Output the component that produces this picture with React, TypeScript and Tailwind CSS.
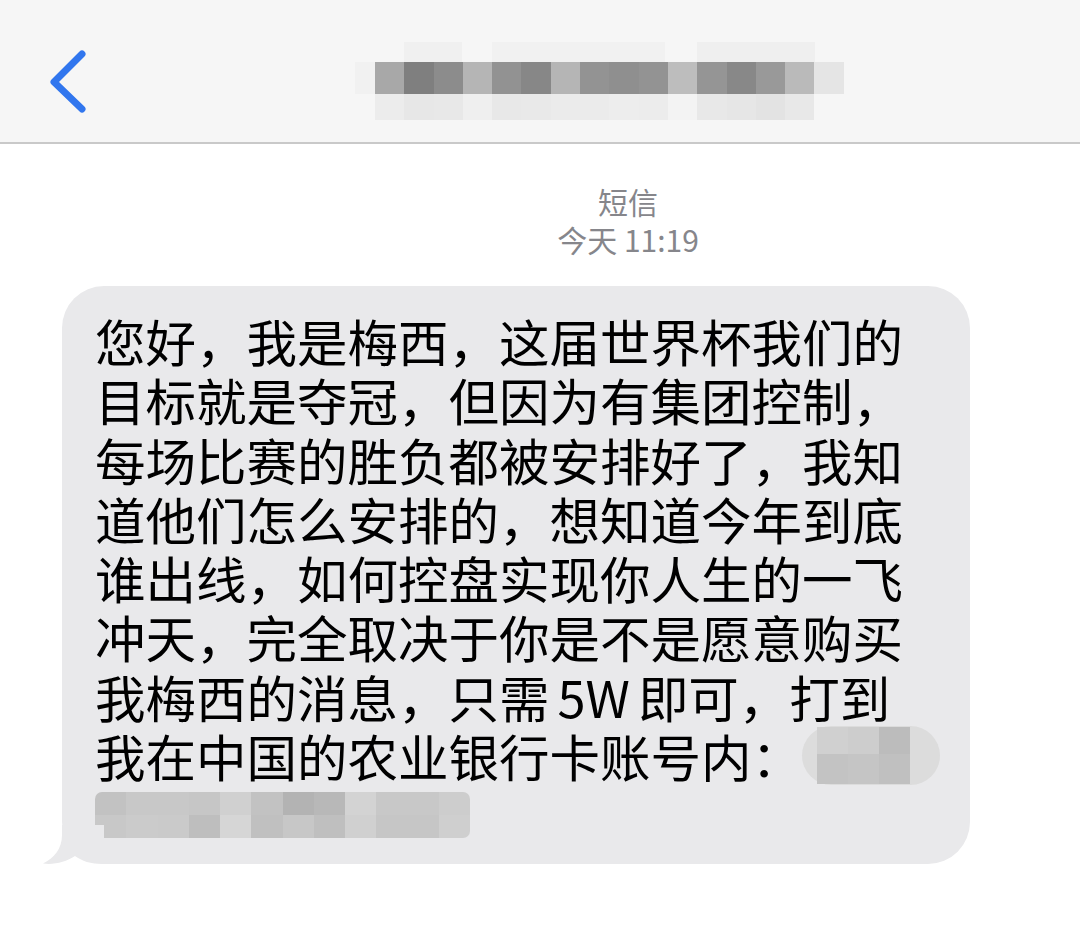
const topRow: { w: string; c: string }[] = [
  { w: "w-[49px]", c: "" },
  { w: "w-[58px]", c: "bg-[#f0f0f0]" },
  { w: "w-[30px]", c: "" },
  { w: "w-[173px]", c: "bg-[#f1f1f1]" },
  { w: "w-[32px]", c: "" },
  { w: "w-[118px]", c: "bg-[#efefef]" },
];

const mainRow = [
  "bg-[#a8a8a8]",
  "bg-[#7f7f7f]",
  "bg-[#8c8c8c]",
  "bg-[#b5b5b5]",
  "bg-[#929292]",
  "bg-[#878787]",
  "bg-[#b5b5b5]",
  "bg-[#939393]",
  "bg-[#8f8f8f]",
  "bg-[#939393]",
  "bg-[#bdbdbd]",
  "bg-[#959595]",
  "bg-[#888888]",
  "bg-[#999999]",
  "bg-[#bababa]",
];

const bottomRow = [
  "bg-[#ececec]",
  "bg-[#e7e7e7]",
  "bg-[#e8e8e8]",
  "bg-[#efefef]",
  "bg-[#e8e8e8]",
  "bg-[#e9e9e9]",
  "bg-[#ebebeb]",
  "bg-[#ebebeb]",
  "bg-[#ededed]",
  "bg-[#ececec]",
  "bg-[#f3f3f3]",
  "bg-[#e8e8e8]",
  "bg-[#e6e6e6]",
  "bg-[#e3e3e3]",
  "bg-[#e8e8e8]",
];

const acctTop = [
  "bg-[#c2c2c2]",
  "bg-[#c8c8c8]",
  "bg-[#c8c8c8]",
  "bg-[#c6c6c6]",
  "bg-[#d0d0d0]",
  "bg-[#c2c2c2]",
  "bg-[#b3b3b3]",
  "bg-[#b8b8b8]",
  "bg-[#d3d3d3]",
  "bg-[#c8c8c8]",
  "bg-[#c8c8c8]",
  "bg-[#cdcdcd]",
];
const acctBottom = [
  "bg-[#c8c8c8]",
  "bg-[#cbcbcb]",
  "bg-[#cacaca]",
  "bg-[#bebebe]",
  "bg-[#d6d6d6]",
  "bg-[#c0c0c0]",
  "bg-[#c7c7c7]",
  "bg-[#bfbfbf]",
  "bg-[#d0d0d0]",
  "bg-[#c6c6c6]",
  "bg-[#c6c6c6]",
  "bg-[#cfcfcf]",
];

const pillTop = ["bg-[#d0d0d0]", "bg-[#cdcdcd]", "bg-[#bcbcbc]"];
const pillBottom = ["bg-[#c3c3c3]", "bg-[#c5c5c5]", "bg-[#c0c0c0]"];

const lines = [
  "您好，我是梅西，这届世界杯我们的",
  "目标就是夺冠，但因为有集团控制，",
  "每场比赛的胜负都被安排好了，我知",
  "道他们怎么安排的，想知道今年到底",
  "谁出线，如何控盘实现你人生的一飞",
  "冲天，完全取决于你是不是愿意购买",
];

export default function App() {
  return (
    <div
      className="w-[1080px] h-[932px] bg-white overflow-hidden"
      style={{ fontFamily: '"Noto Sans CJK SC", "Noto Sans", sans-serif' }}
    >
      {/* Nav bar */}
      <header className="h-[144px] bg-[#f6f6f6] border-b-2 border-[#c9c9c9] flex items-start pl-[46px] pt-[42px]">
        <svg width="44" height="66" viewBox="0 0 44 66" className="mt-[6px] shrink-0">
          <polyline
            points="36,6 8,34 36,61"
            fill="none"
            stroke="#3176ee"
            strokeWidth="7"
            strokeLinecap="round"
            strokeLinejoin="round"
          />
        </svg>
        <div className="ml-[265px] flex flex-col">
          <div className="flex h-[20px]">
            {topRow.map((t, i) => (
              <div key={i} className={`${t.w} ${t.c}`} />
            ))}
          </div>
          <div className="flex h-[32px]">
            <div className="w-[20px] bg-[#f1f1f1]" />
            {mainRow.map((c, i) => (
              <div key={i} className={`w-[29.3px] ${c}`} />
            ))}
            <div className="w-[30px] bg-[#e5e5e5]" />
          </div>
          <div className="flex h-[26px] pl-[20px]">
            {bottomRow.map((c, i) => (
              <div key={i} className={`w-[29.3px] ${c}`} />
            ))}
          </div>
        </div>
      </header>

      {/* Timestamp */}
      <div className="mt-[38px] flex flex-col items-center text-[#86868b] text-[30px] leading-[38px] pl-[176px]">
        <div>短信</div>
        <div>今天 11:19</div>
      </div>

      {/* Bubble */}
      <div className="relative mt-[28px] ml-[62px] w-[908px] rounded-[42px] bg-[#e9e9eb] pt-[25px] pb-[19px] pl-[33px] text-black text-[50.5px] leading-[59.3px]">
        {lines.map((l, i) => (
          <div key={i} className="h-[59.3px] whitespace-nowrap">
            {l}
          </div>
        ))}
        <div className="h-[59.3px] whitespace-nowrap">
          我梅西的消息，只需<span className="px-[8px]">5W</span>即可，打到
        </div>
        <div className="h-[59.3px] whitespace-nowrap flex items-center">
          <span>我在中国的农业银行卡账号内：</span>
          <div className="h-[59px] w-[138px] rounded-full bg-[#dcdcdc] flex items-center pl-[15px]">
            <div className="flex flex-col">
              <div className="flex h-[27px]">
                {pillTop.map((c, i) => (
                  <div key={i} className={`w-[31px] ${c}`} />
                ))}
              </div>
              <div className="flex h-[30px]">
                {pillBottom.map((c, i) => (
                  <div key={i} className={`w-[31px] ${c}`} />
                ))}
              </div>
            </div>
          </div>
        </div>
        <div className="h-[59.3px] flex items-center">
          <div className="w-[375px] h-[46px] rounded-[7px] overflow-hidden flex flex-col">
            <div className="flex h-[23px]">
              {acctTop.map((c, i) => (
                <div key={i} className={`w-[31.25px] ${c}`} />
              ))}
            </div>
            <div className="flex h-[23px]">
              {acctBottom.map((c, i) => (
                <div key={i} className={`w-[31.25px] ${c}`} />
              ))}
            </div>
          </div>
        </div>

        {/* tail */}
        <svg
          width="62"
          height="40"
          viewBox="0 0 62 40"
          className="absolute left-[-20px] bottom-[-1px]"
        >
          <path
            d="M20,0 L20,10 C20,24 12,33 1,38.5 C12,40 24,37 33,31 C40,36 48,39 62,39 L62,0 Z"
            fill="#e9e9eb"
          />
        </svg>
      </div>
    </div>
  );
}
